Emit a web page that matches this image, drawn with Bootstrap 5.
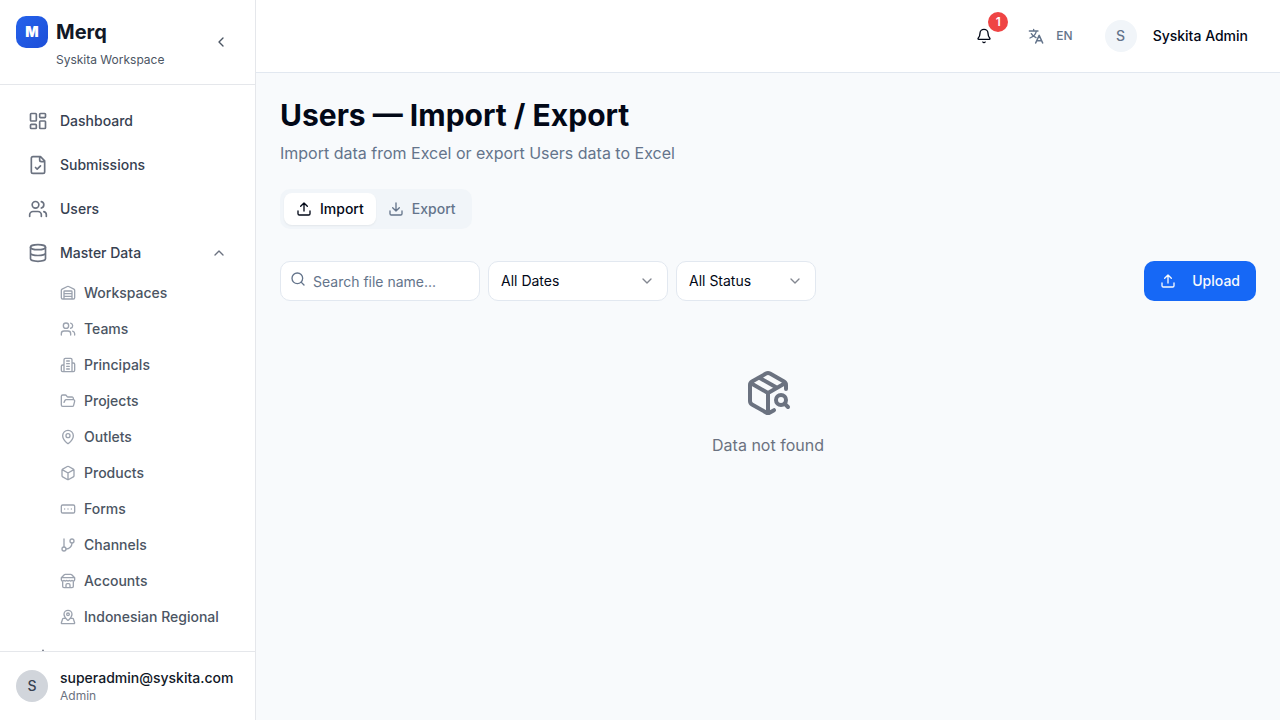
<!DOCTYPE html>
<html lang="en">
<head>
<meta charset="utf-8">
<meta name="viewport" content="width=device-width, initial-scale=1">
<title>Merq — Users Import / Export</title>
<link href="https://cdn.jsdelivr.net/npm/bootstrap@5.3.0/dist/css/bootstrap.min.css" rel="stylesheet">
<style>
body{font-family:Inter,sans-serif;font-size:14px;line-height:20px;color:#020817;background:#f8fafc}
svg{fill:none;stroke:currentColor;stroke-width:2;stroke-linecap:round;stroke-linejoin:round;flex:none;display:block;width:16px;height:16px}
.fw-medium{font-weight:500!important}
.sidebar{width:256px;border-right:1px solid #e5e7eb;background:#fff;flex:none}
.brand-row{height:85px;border-bottom:1px solid #e5e7eb;padding:16px}
.logo{width:32px;height:32px;border-radius:10px;background:linear-gradient(135deg,#2563eb,#1d4ed8);color:#fff;font-weight:900;font-size:14px}
.brand-name{font-size:20px;line-height:28px;font-weight:700;color:#111827;margin-top:2px}
.brand-sub{font-size:12px;line-height:16px;color:#4b5563;margin-top:6px}
.collapse-btn{color:#4b5563;margin:18px 10px 0 0}
.side-nav{padding:16px;min-height:0}
.main-link{height:40px;padding:0 12px;gap:12px;margin-bottom:4px;color:#374151;font-weight:500}
.main-link svg{width:20px;height:20px;color:#6b7280}
.main-link svg.chev{width:16px;height:16px}
.sub-nav{padding-left:32px}
.sub-link{height:32px;padding:0 12px;gap:8px;margin-bottom:4px;color:#4b5563;font-weight:500;white-space:nowrap}
.sub-link svg{color:#9ca3af}
.account-row{height:69px;border-top:1px solid #e5e7eb;padding:0 16px;gap:12px;flex:none}
.avatar{width:32px;height:32px;border-radius:50%;background:#d1d5db;color:#374151;font-weight:500;flex:none}
.avatar.pale{background:#f1f5f9;color:#64748b}
.account-mail{color:#111827;font-weight:500}
.account-role{font-size:12px;line-height:16px;color:#6b7280}
.topbar{height:73px;border-bottom:1px solid #e2e8f0;background:#fff;padding-right:32px}
.bell-badge{left:12px;top:-16px;width:20px;height:20px;border-radius:50%;background:#ef4444;color:#fff;font-size:12px;font-weight:600}
.lang{color:#64748b;font-size:12px;font-weight:500;gap:12px;margin:0 32px 0 36px}
.page{padding:24px}
.page-title{font-size:30px;line-height:36px;font-weight:700;margin:0}
.page-sub{font-size:16px;line-height:24px;color:#64748b;margin:8px 0 24px}
.seg{background:#f1f5f9;border-radius:10px;padding:4px;height:40px;width:192px;color:#64748b}
.seg-item{padding:0 12px;gap:8px;border-radius:8px;font-weight:500}
.seg-item.on{background:#fff;color:#020817;box-shadow:0 1px 2px rgba(0,0,0,.06)}
.filters{margin-top:32px}
.field{height:40px;border:1px solid #e2e8f0;border-radius:10px;background:#fff;padding:0 12px}
.search{width:200px;padding-left:9px;gap:7px;color:#64748b}
.search svg{margin-top:-5px}
.search span{padding-top:2px}
.dates{width:180px}
.status{width:140px}
.field .chev{color:#838790}
.upload{height:40px;width:112px;border-radius:10px;background:#1668f6;color:#f8fafc;padding:0 16px;font-weight:500}
.empty-state{margin-top:68px;color:#6b7280;font-size:16px;line-height:24px}
.empty-state svg{width:48px;height:48px;margin-bottom:16px}
</style>
</head>
<body>
<svg class="d-none">
<symbol id="upload" viewBox="0 0 24 24"><path d="M21 15v4a2 2 0 0 1-2 2H5a2 2 0 0 1-2-2v-4M17 8l-5-5-5 5M12 3v12"/></symbol>
<symbol id="users" viewBox="0 0 24 24"><path d="M16 21v-2a4 4 0 0 0-4-4H6a4 4 0 0 0-4 4v2M22 21v-2a4 4 0 0 0-3-3.87M16 3.13a4 4 0 0 1 0 7.75"/><circle cx="9" cy="7" r="4"/></symbol>
<symbol id="down" viewBox="0 0 24 24"><path d="m6 9 6 6 6-6"/></symbol>
</svg>
<div class="d-flex vh-100 overflow-hidden">
<aside class="sidebar d-flex flex-column">
  <div class="brand-row d-flex flex-shrink-0">
    <div class="logo d-flex align-items-center justify-content-center me-2">M</div>
    <div class="flex-grow-1"><div class="brand-name">Merq</div><div class="brand-sub">Syskita Workspace</div></div>
    <svg class="collapse-btn" viewBox="0 0 24 24"><path d="m15 18-6-6 6-6"/></svg>
  </div>
  <nav class="side-nav flex-grow-1 overflow-hidden">
    <div class="main-link d-flex align-items-center"><svg viewBox="0 0 24 24"><rect width="7" height="9" x="3" y="3" rx="1"/><rect width="7" height="5" x="14" y="3" rx="1"/><rect width="7" height="9" x="14" y="12" rx="1"/><rect width="7" height="5" x="3" y="16" rx="1"/></svg>Dashboard</div>
    <div class="main-link d-flex align-items-center"><svg viewBox="0 0 24 24"><path d="M15 2H6a2 2 0 0 0-2 2v16a2 2 0 0 0 2 2h12a2 2 0 0 0 2-2V7ZM14 2v4a2 2 0 0 0 2 2h4M9 15l2 2 4-4"/></svg>Submissions</div>
    <div class="main-link d-flex align-items-center"><svg><use href="#users"/></svg>Users</div>
    <div class="main-link d-flex align-items-center mb-0"><svg viewBox="0 0 24 24"><ellipse cx="12" cy="5" rx="9" ry="3"/><path d="M3 5v14a9 3 0 0 0 18 0V5M3 12a9 3 0 0 0 18 0"/></svg><span class="flex-grow-1">Master Data</span><svg class="chev" viewBox="0 0 24 24"><path d="m18 15-6-6-6 6"/></svg></div>
    <div class="sub-nav pt-1">
      <div class="sub-link d-flex align-items-center"><svg viewBox="0 0 24 24"><path d="M18 21V10a1 1 0 0 0-1-1H7a1 1 0 0 0-1 1v11M22 19a2 2 0 0 1-2 2H4a2 2 0 0 1-2-2V8a2 2 0 0 1 1.132-1.803l7.95-3.974a2 2 0 0 1 1.837 0l7.948 3.974A2 2 0 0 1 22 8zM6 13h12M6 17h12"/></svg>Workspaces</div>
      <div class="sub-link d-flex align-items-center"><svg><use href="#users"/></svg>Teams</div>
      <div class="sub-link d-flex align-items-center"><svg viewBox="0 0 24 24"><path d="M6 22V4a2 2 0 0 1 2-2h8a2 2 0 0 1 2 2v18ZM6 12H4a2 2 0 0 0-2 2v6a2 2 0 0 0 2 2h2M18 9h2a2 2 0 0 1 2 2v9a2 2 0 0 1-2 2h-2M10 6h4M10 10h4M10 14h4M10 18h4"/></svg>Principals</div>
      <div class="sub-link d-flex align-items-center"><svg viewBox="0 0 24 24"><path d="m6 14 1.5-2.9A2 2 0 0 1 9.24 10H20a2 2 0 0 1 1.94 2.5l-1.54 6a2 2 0 0 1-1.95 1.5H4a2 2 0 0 1-2-2V5a2 2 0 0 1 2-2h3.9a2 2 0 0 1 1.69.9l.81 1.2a2 2 0 0 0 1.67.9H18a2 2 0 0 1 2 2v2"/></svg>Projects</div>
      <div class="sub-link d-flex align-items-center"><svg viewBox="0 0 24 24"><path d="M20 10c0 4.993-5.539 10.193-7.399 11.799a1 1 0 0 1-1.202 0C9.539 20.193 4 14.993 4 10a8 8 0 0 1 16 0"/><circle cx="12" cy="10" r="3"/></svg>Outlets</div>
      <div class="sub-link d-flex align-items-center"><svg viewBox="0 0 24 24"><path d="M21 8a2 2 0 0 0-1-1.73l-7-4a2 2 0 0 0-2 0l-7 4A2 2 0 0 0 3 8v8a2 2 0 0 0 1 1.73l7 4a2 2 0 0 0 2 0l7-4A2 2 0 0 0 21 16ZM3.3 7l8.7 5 8.7-5M12 22V12"/></svg>Products</div>
      <div class="sub-link d-flex align-items-center"><svg viewBox="0 0 24 24"><rect width="20" height="12" x="2" y="6" rx="2"/><path d="M12 12h.01M17 12h.01M7 12h.01"/></svg>Forms</div>
      <div class="sub-link d-flex align-items-center"><svg viewBox="0 0 24 24"><path d="M6 3v12M18 9a9 9 0 0 1-9 9"/><circle cx="18" cy="6" r="3"/><circle cx="6" cy="18" r="3"/></svg>Channels</div>
      <div class="sub-link d-flex align-items-center"><svg viewBox="0 0 24 24"><path d="m2 7 4.41-4.41A2 2 0 0 1 7.83 2h8.34a2 2 0 0 1 1.42.59L22 7M4 12v8a2 2 0 0 0 2 2h12a2 2 0 0 0 2-2v-8M15 22v-4a2 2 0 0 0-2-2h-2a2 2 0 0 0-2 2v4M2 7h20M22 7v3a2 2 0 0 1-2 2a2.7 2.7 0 0 1-1.59-.63.7.7 0 0 0-.82 0A2.7 2.7 0 0 1 16 12a2.7 2.7 0 0 1-1.59-.63.7.7 0 0 0-.82 0A2.7 2.7 0 0 1 12 12a2.7 2.7 0 0 1-1.59-.63.7.7 0 0 0-.82 0A2.7 2.7 0 0 1 8 12a2.7 2.7 0 0 1-1.59-.63.7.7 0 0 0-.82 0A2.7 2.7 0 0 1 4 12a2 2 0 0 1-2-2V7"/></svg>Accounts</div>
      <div class="sub-link d-flex align-items-center"><svg viewBox="0 0 24 24"><path d="M18 8c0 3.613-3.869 7.429-5.393 8.795a1 1 0 0 1-1.214 0C9.87 15.429 6 11.613 6 8a6 6 0 0 1 12 0M8.714 14h-3.71a1 1 0 0 0-.948.683l-2.004 6A1 1 0 0 0 3 22h18a1 1 0 0 0 .948-1.316l-2-6a1 1 0 0 0-.949-.684h-3.712"/><circle cx="12" cy="8" r="2"/></svg>Indonesian Regional</div>
    </div>
    <div class="main-link d-flex align-items-center"><svg viewBox="0 0 24 24"><path d="M18 4v16M12 10v10M6 14v6"/></svg></div>
  </nav>
  <div class="account-row d-flex align-items-center">
    <div class="avatar d-flex align-items-center justify-content-center">S</div>
    <div><div class="account-mail">superadmin@syskita.com</div><div class="account-role">Admin</div></div>
  </div>
</aside>
<div class="flex-grow-1">
  <header class="topbar d-flex align-items-center justify-content-end">
    <div class="position-relative"><svg viewBox="0 0 24 24"><path d="M10.268 21a2 2 0 0 0 3.464 0M3.262 15.326A1 1 0 0 0 4 17h16a1 1 0 0 0 .74-1.673C19.41 13.956 18 12.499 18 8A6 6 0 0 0 6 8c0 4.499-1.411 5.956-2.738 7.326"/></svg><span class="bell-badge position-absolute d-flex align-items-center justify-content-center">1</span></div>
    <div class="lang d-flex align-items-center"><svg viewBox="0 0 24 24"><path d="M2 4.5h13M8.5 2v2.5M12.500 5c-1 4-4.500 8-9.500 10M5 8.500c1.500 3 4 4.500 7 6"/><path stroke-width="2.300" d="m11.500 22.500 5.250-11.500L22 22.500M13.500 19h6.500"/></svg>EN</div>
    <div class="avatar pale d-flex align-items-center justify-content-center me-3">S</div>
    <span class="fw-medium">Syskita Admin</span>
  </header>
  <main class="page">
    <h1 class="page-title">Users — Import / Export</h1>
    <p class="page-sub">Import data from Excel or export Users data to Excel</p>
    <div class="seg d-flex">
      <div class="seg-item on d-flex align-items-center"><svg><use href="#upload"/></svg>Import</div>
      <div class="seg-item d-flex align-items-center"><svg viewBox="0 0 24 24"><path d="M21 15v4a2 2 0 0 1-2 2H5a2 2 0 0 1-2-2v-4M7 10l5 5 5-5M12 15V3"/></svg>Export</div>
    </div>
    <div class="filters d-flex gap-2">
      <div class="field search d-flex align-items-center"><svg viewBox="0 0 24 24"><circle cx="11" cy="11" r="8"/><path d="m21 21-4.3-4.3"/></svg><span>Search file name...</span></div>
      <div class="field dates d-flex align-items-center justify-content-between">All Dates<svg class="chev"><use href="#down"/></svg></div>
      <div class="field status d-flex align-items-center justify-content-between">All Status<svg class="chev"><use href="#down"/></svg></div>
      <div class="upload d-flex align-items-center justify-content-between ms-auto"><svg><use href="#upload"/></svg>Upload</div>
    </div>
    <div class="empty-state d-flex flex-column align-items-center">
      <svg viewBox="0 0 24 24"><path d="M21 10V8a2 2 0 0 0-1-1.73l-7-4a2 2 0 0 0-2 0l-7 4A2 2 0 0 0 3 8v8a2 2 0 0 0 1 1.73l7 4a2 2 0 0 0 2 0l2-1.14M7.5 4.27l9 5.15M3.29 7 12 12l8.71-5M12 22V12"/><circle cx="18.5" cy="15.5" r="2.5"/><path d="M20.27 17.27 22 19"/></svg>
      <span>Data not found</span>
    </div>
  </main>
</div>
</div>
<script src="https://cdn.jsdelivr.net/npm/bootstrap@5.3.0/dist/js/bootstrap.bundle.min.js"></script>
</body>
</html>
